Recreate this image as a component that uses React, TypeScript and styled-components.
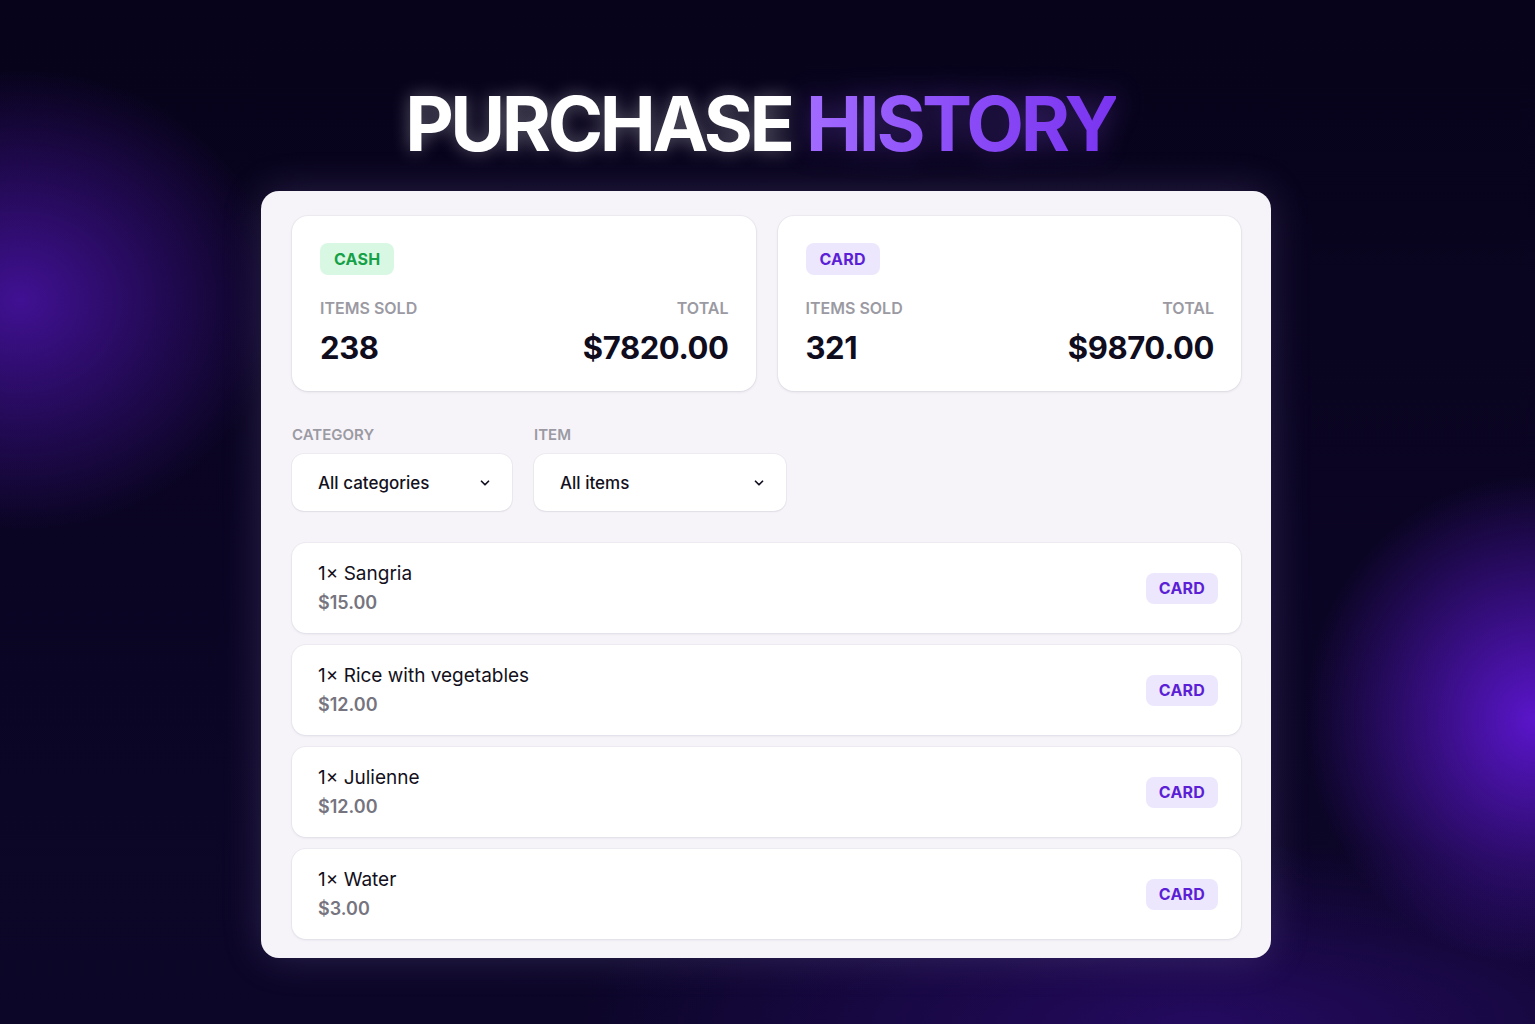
import styled, { createGlobalStyle } from "styled-components";

type Method = "cash" | "card";

interface Purchase {
  qty: number;
  name: string;
  price: number;
  method: Method;
}

const purchases: Purchase[] = [
  { qty: 1, name: "Sangria", price: 15, method: "card" },
  { qty: 1, name: "Rice with vegetables", price: 12, method: "card" },
  { qty: 1, name: "Julienne", price: 12, method: "card" },
  { qty: 1, name: "Water", price: 3, method: "card" },
];

const summary = [
  { method: "cash" as Method, sold: 238, total: 7820 },
  { method: "card" as Method, sold: 321, total: 9870 },
];

const GlobalStyle = createGlobalStyle`
  html, body {
    margin: 0;
    padding: 0;
    background: #07031a;
  }
  * {
    box-sizing: border-box;
  }
  body {
    font-family: Inter, "Noto Sans", "Liberation Sans", sans-serif;
    -webkit-font-smoothing: antialiased;
  }
`;

const Page = styled.div`
  min-height: 1024px;
  padding-top: 77px;
  display: flex;
  flex-direction: column;
  align-items: center;
  background:
    radial-gradient(ellipse 360px 320px at 20px 300px, rgba(88, 22, 196, 0.7), transparent 72%),
    radial-gradient(ellipse 320px 340px at 1535px 720px, rgba(104, 24, 232, 0.85), transparent 72%),
    radial-gradient(ellipse 900px 260px at 1200px 1024px, rgba(60, 14, 150, 0.5), transparent 70%),
    linear-gradient(180deg, #07031a 0%, #0b0524 55%, #0c0628 100%);
`;

const Title = styled.h1`
  margin: 0 14px 20px 0;
  font-size: 75px;
  line-height: 94px;
  font-weight: 700;
  letter-spacing: -3.4px;
  color: #ffffff;
  text-shadow: 0 0 18px rgba(255, 255, 255, 0.35);
`;

const Accent = styled.span`
  background: linear-gradient(90deg, #a26bff 0%, #8b4cf7 50%, #7a34f0 100%);
  -webkit-background-clip: text;
  background-clip: text;
  color: transparent;
  text-shadow: none;
  filter: drop-shadow(0 0 14px rgba(150, 90, 255, 0.35));
`;

const Panel = styled.main`
  width: 1010px;
  margin-right: 3px;
  background: #f6f4f9;
  border-radius: 18px;
  padding: 25px 30px 19px 31px;
  box-shadow: 0 0 40px rgba(190, 170, 255, 0.18);
  display: flex;
  flex-direction: column;
`;

const StatsRow = styled.div`
  display: grid;
  grid-template-columns: 1fr 1fr;
  gap: 22px;
`;

const StatCard = styled.section`
  background: #ffffff;
  border-radius: 16px;
  padding: 27px 27px 25px 28px;
  box-shadow: 0 1px 3px rgba(30, 20, 60, 0.1), 0 0 0 1px rgba(30, 20, 60, 0.03);
  display: flex;
  flex-direction: column;
`;

const Badge = styled.span<{ $method: Method }>`
  align-self: flex-start;
  display: inline-flex;
  align-items: center;
  height: 32px;
  padding: 0 14px;
  border-radius: 8px;
  font-size: 16px;
  font-weight: 700;
  letter-spacing: 0.2px;
  background: ${({ $method }) => ($method === "cash" ? "#d9f8e3" : "#ede7fe")};
  color: ${({ $method }) => ($method === "cash" ? "#16a047" : "#5b1fd6")};
`;

const StatGrid = styled.div`
  margin-top: 23px;
  display: grid;
  grid-template-columns: 1fr auto;
  row-gap: 12px;
`;

const StatLabel = styled.span<{ $right?: boolean }>`
  font-size: 16px;
  line-height: 20px;
  font-weight: 600;
  color: #9b9aa3;
  text-align: ${({ $right }) => ($right ? "right" : "left")};
`;

const StatValue = styled.span<{ $right?: boolean }>`
  font-size: 31px;
  line-height: 36px;
  font-weight: 700;
  color: #0f0c1d;
  letter-spacing: -0.4px;
  text-align: ${({ $right }) => ($right ? "right" : "left")};
`;

const Filters = styled.div`
  margin-top: 34px;
  display: flex;
  gap: 22px;
`;

const Field = styled.label<{ $width: number }>`
  display: flex;
  flex-direction: column;
  gap: 9px;
  width: ${({ $width }) => $width}px;
`;

const FieldLabel = styled.span`
  font-size: 15px;
  line-height: 20px;
  font-weight: 600;
  color: #9b9aa3;
`;

const Select = styled.div`
  height: 57px;
  background: #ffffff;
  border-radius: 12px;
  padding: 0 20px 0 26px;
  display: flex;
  align-items: center;
  justify-content: space-between;
  font-size: 17px;
  font-weight: 500;
  color: #131020;
  box-shadow: 0 1px 2px rgba(30, 20, 60, 0.06), 0 0 0 1px rgba(30, 20, 60, 0.04);
`;

const List = styled.ul`
  list-style: none;
  margin: 32px 0 0;
  padding: 0;
  display: flex;
  flex-direction: column;
  gap: 12px;
`;

const Row = styled.li`
  height: 90px;
  background: #ffffff;
  border-radius: 14px;
  padding: 0 23px 0 26px;
  display: flex;
  align-items: center;
  justify-content: space-between;
  box-shadow: 0 1px 3px rgba(30, 20, 60, 0.08), 0 0 0 1px rgba(30, 20, 60, 0.03);
`;

const RowInfo = styled.div`
  display: flex;
  flex-direction: column;
  gap: 6px;
`;

const RowName = styled.span`
  font-size: 19px;
  line-height: 23px;
  font-weight: 400;
  color: #131020;
`;

const RowPrice = styled.span`
  font-size: 18px;
  line-height: 23px;
  font-weight: 600;
  color: #76747e;
`;

const RowBadge = styled(Badge)`
  align-self: center;
  height: 31px;
  padding: 0 13px;
`;

const Chevron = () => (
  <svg width="14" height="14" viewBox="0 0 24 24" fill="none" stroke="#131020" strokeWidth="3" strokeLinecap="round" strokeLinejoin="round">
    <path d="M6 9l6 6 6-6" />
  </svg>
);

const money = (n: number) => `$${n.toFixed(2)}`;

export default function App() {
  return (
    <>
      <GlobalStyle />
      <Page>
        <Title>
          PURCHASE <Accent>HISTORY</Accent>
        </Title>
        <Panel>
          <StatsRow>
            {summary.map((s) => (
              <StatCard key={s.method}>
                <Badge $method={s.method}>{s.method.toUpperCase()}</Badge>
                <StatGrid>
                  <StatLabel>ITEMS SOLD</StatLabel>
                  <StatLabel $right>TOTAL</StatLabel>
                  <StatValue>{s.sold}</StatValue>
                  <StatValue $right>{money(s.total)}</StatValue>
                </StatGrid>
              </StatCard>
            ))}
          </StatsRow>
          <Filters>
            <Field $width={220}>
              <FieldLabel>CATEGORY</FieldLabel>
              <Select>
                All categories
                <Chevron />
              </Select>
            </Field>
            <Field $width={252}>
              <FieldLabel>ITEM</FieldLabel>
              <Select>
                All items
                <Chevron />
              </Select>
            </Field>
          </Filters>
          <List>
            {purchases.map((p) => (
              <Row key={p.name}>
                <RowInfo>
                  <RowName>
                    {p.qty}× {p.name}
                  </RowName>
                  <RowPrice>{money(p.price)}</RowPrice>
                </RowInfo>
                <RowBadge $method={p.method}>{p.method.toUpperCase()}</RowBadge>
              </Row>
            ))}
          </List>
        </Panel>
      </Page>
    </>
  );
}
